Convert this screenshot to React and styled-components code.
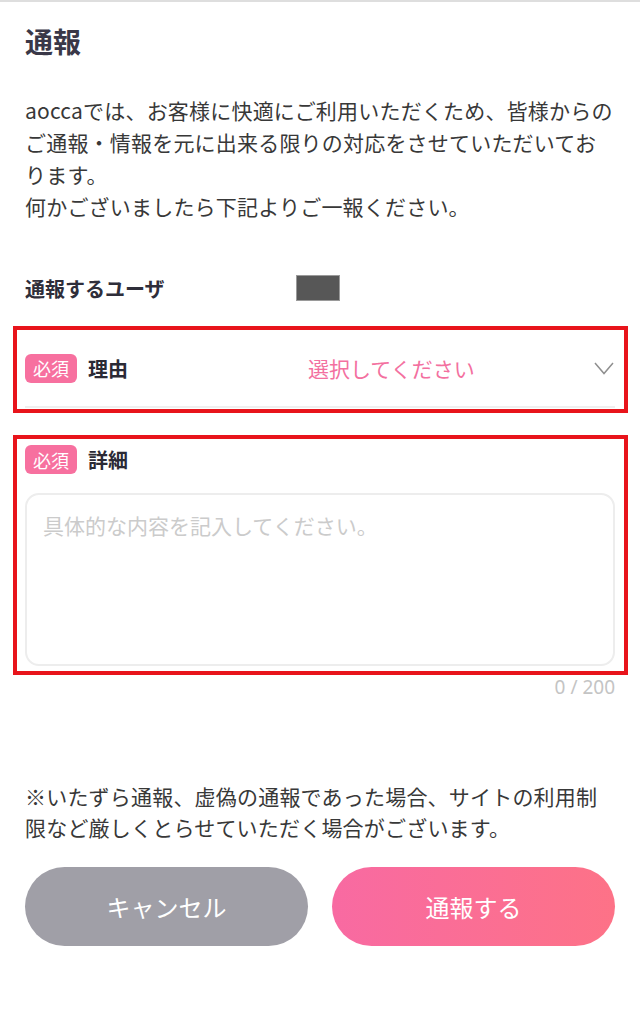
import React from "react";
import styled, { createGlobalStyle } from "styled-components";

const Global = createGlobalStyle`
  html, body { margin: 0; padding: 0; background: #fff; }
  body { font-family: "Noto Sans CJK JP", "Noto Sans", sans-serif; }
  * { box-sizing: border-box; }
`;

const Page = styled.div`
  border-top: 2px solid #dedede;
  padding: 19px 25px 40px;
  width: 640px;
`;

const Title = styled.h1`
  margin: 0;
  font-size: 28px;
  line-height: 40px;
  font-weight: 700;
  color: #3a3848;
`;

const Paragraph = styled.p`
  margin: ${(p) => p.$mt || 0}px 0 0;
  font-size: 21px;
  line-height: ${(p) => p.$lh || 32}px;
  letter-spacing: 0.2px;
  color: #383838;
`;

const UserRow = styled.div`
  margin-top: 50px;
  height: 32px;
  display: grid;
  grid-template-columns: 271px 1fr;
  align-items: center;
`;

const RowLabel = styled.span`
  font-size: 20px;
  font-weight: 700;
  color: #2f2e3a;
`;

const Masked = styled.span`
  display: block;
  width: 44px;
  height: 26px;
  background: #575757;
  border: 1px solid #9a9a9a;
`;

const Highlight = styled.section`
  margin: 22px -13px 0 -12px;
  border: 4px solid #e8141b;
  padding: ${(p) => p.$pad};
`;

const SelectRow = styled.div`
  height: 78px;
  display: grid;
  grid-template-columns: 271px 1fr auto;
  align-items: center;
  border-bottom: 2px solid #efefef;
`;

const FieldHead = styled.div`
  display: flex;
  align-items: center;
  gap: 11px;
`;

const Badge = styled.span`
  display: inline-flex;
  align-items: center;
  justify-content: center;
  width: 52px;
  height: 29px;
  border-radius: 6px;
  background: #f7709f;
  color: #fff;
  font-size: 18px;
  line-height: 1;
`;

const FieldLabel = styled.span`
  font-size: 20px;
  font-weight: 700;
  color: #2b2a35;
`;

const SelectValue = styled.span`
  padding-left: 12px;
  font-size: 21px;
  color: #f3709f;
`;

const Chevron = styled.svg`
  display: block;
  width: 20px;
  height: 13px;
  margin-right: 1px;
`;

const TextArea = styled.textarea`
  display: block;
  margin-top: 19px;
  width: 100%;
  height: 173px;
  resize: none;
  border: 2px solid #ededed;
  border-radius: 14px;
  padding: 16px 16px;
  font-family: inherit;
  font-size: 21px;
  line-height: 28px;
  color: #333;
  outline: none;
  &::placeholder { color: #cbcbcb; }
`;

const Counter = styled.div`
  margin-top: 0;
  text-align: right;
  font-size: 19px;
  line-height: 25px;
  color: #c4c4c4;
  font-family: "Noto Sans", sans-serif;
`;

const Buttons = styled.div`
  margin-top: 24px;
  display: grid;
  grid-template-columns: 1fr 1fr;
  gap: 24px;
`;

const Button = styled.button`
  height: 79px;
  border: none;
  border-radius: 40px;
  font-family: inherit;
  font-size: 24px;
  font-weight: 400;
  color: #fff;
  background: ${(p) =>
    p.$primary ? "linear-gradient(90deg, #f86aa2 0%, #fd7287 100%)" : "#a09fa7"};
`;

export default function App() {
  return (
    <>
      <Global />
      <Page>
        <Title>通報</Title>
        <Paragraph $mt={33}>
          aoccaでは、お客様に快適にご利用いただくため、皆様からのご通報・情報を元に出来る限りの対応をさせていただいております。
          <br />
          何かございましたら下記よりご一報ください。
        </Paragraph>
        <UserRow>
          <RowLabel>通報するユーザ</RowLabel>
          <Masked />
        </UserRow>
        <Highlight $pad="0 9px 1px 8px">
          <SelectRow>
            <FieldHead>
              <Badge>必須</Badge>
              <FieldLabel>理由</FieldLabel>
            </FieldHead>
            <SelectValue>選択してください</SelectValue>
            <Chevron viewBox="0 0 20 13">
              <polyline points="1,1 10,11.5 19,1" fill="none" stroke="#8f8f8f" strokeWidth="1.5" />
            </Chevron>
          </SelectRow>
        </Highlight>
        <Highlight $pad="6px 9px 5px 8px">
          <FieldHead>
            <Badge>必須</Badge>
            <FieldLabel>詳細</FieldLabel>
          </FieldHead>
          <TextArea placeholder="具体的な内容を記入してください。" />
        </Highlight>
        <Counter>0 / 200</Counter>
        <Paragraph $mt={81} $lh={31}>
          ※いたずら通報、虚偽の通報であった場合、サイトの利用制限など厳しくとらせていただく場合がございます。
        </Paragraph>
        <Buttons>
          <Button>キャンセル</Button>
          <Button $primary>通報する</Button>
        </Buttons>
      </Page>
    </>
  );
}
